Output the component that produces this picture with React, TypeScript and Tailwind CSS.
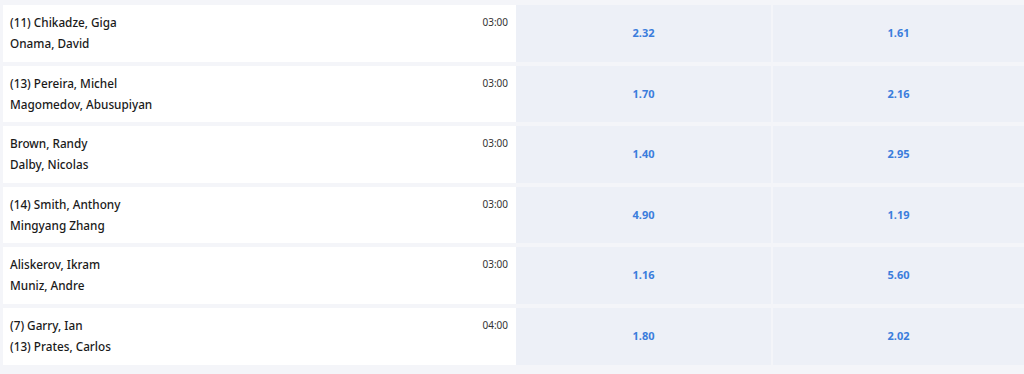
import React from "react";

const rows = [
  { a: "(11) Chikadze, Giga", b: "Onama, David", t: "03:00", o1: "2.32", o2: "1.61" },
  { a: "(13) Pereira, Michel", b: "Magomedov, Abusupiyan", t: "03:00", o1: "1.70", o2: "2.16" },
  { a: "Brown, Randy", b: "Dalby, Nicolas", t: "03:00", o1: "1.40", o2: "2.95" },
  { a: "(14) Smith, Anthony", b: "Mingyang Zhang", t: "03:00", o1: "4.90", o2: "1.19" },
  { a: "Aliskerov, Ikram", b: "Muniz, Andre", t: "03:00", o1: "1.16", o2: "5.60" },
  { a: "(7) Garry, Ian", b: "(13) Prates, Carlos", t: "04:00", o1: "1.80", o2: "2.02" },
];

export default function App() {
  return (
    <div
      className="w-[1024px] h-[374px] bg-[#f4f5f9] pl-[3px] pt-[5px] flex flex-col gap-[4px] overflow-hidden"
      style={{ fontFamily: '"Noto Sans", "Open Sans", sans-serif' }}
    >
      {rows.map((r, i) => (
        <div key={i} className="flex h-[56.6px] shrink-0">
          <div className="w-[513px] bg-white flex justify-between pl-[7px] pr-[8px] pt-[7px] leading-[21px]">
            <div className="flex flex-col text-[11.75px] font-medium text-[#1a1a1a]">
              <span>{r.a}</span>
              <span>{r.b}</span>
            </div>
            <span className="text-[10px] text-[#333]">{r.t}</span>
          </div>
          <div className="w-[255px] bg-[#edf0f7] flex items-center justify-center text-[11px] font-bold text-[#3b7ddc]">
            {r.o1}
          </div>
          <div className="w-[2px]" />
          <div className="flex-1 bg-[#edf0f7] flex items-center justify-center text-[11px] font-bold text-[#3b7ddc]">
            {r.o2}
          </div>
        </div>
      ))}
    </div>
  );
}
